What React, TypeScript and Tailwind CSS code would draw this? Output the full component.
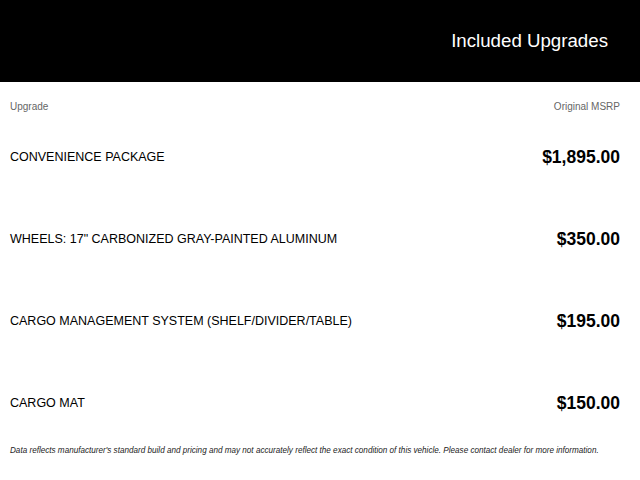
import React from 'react';

const upgrades = [
    { name: "CONVENIENCE PACKAGE", price: "$1,895.00" },
    { name: "WHEELS: 17\" CARBONIZED GRAY-PAINTED ALUMINUM", price: "$350.00" },
    { name: "CARGO MANAGEMENT SYSTEM (SHELF/DIVIDER/TABLE)", price: "$195.00" },
    { name: "CARGO MAT", price: "$150.00" },
];

export default function App() {
    return (
        <main className="w-[640px] h-[480px] bg-white overflow-hidden font-[family-name:'Liberation_Sans',Arial,sans-serif]">
            {/* Header */}
            <header className="h-[82px] bg-black flex items-center justify-end pr-[32px]">
                <h1 className="text-white text-[18.7px] leading-none">Included Upgrades</h1>
            </header>

            {/* Column labels */}
            <div className="h-[34px] pt-[18px] pl-[10px] pr-[20px] flex justify-between text-[10px] leading-[14px] text-[#666]">
                <span>Upgrade</span>
                <span>Original MSRP</span>
            </div>

            {/* Rows */}
            <ul>
                {upgrades.map((item, index) => (
                    <li key={index} className="h-[82px] pl-[10px] pr-[20px] flex items-center justify-between">
                        <span className="text-[12.5px] text-black">{item.name}</span>
                        <span className="text-[17.5px] font-bold text-black">{item.price}</span>
                    </li>
                ))}
            </ul>

            <p className="pl-[10px] pt-[1px] text-[8.15px] leading-[12px] italic text-[#222]">
                Data reflects manufacturer's standard build and pricing and may not accurately reflect the exact condition of this vehicle. Please contact dealer for more information.
            </p>
        </main>
    );
}
